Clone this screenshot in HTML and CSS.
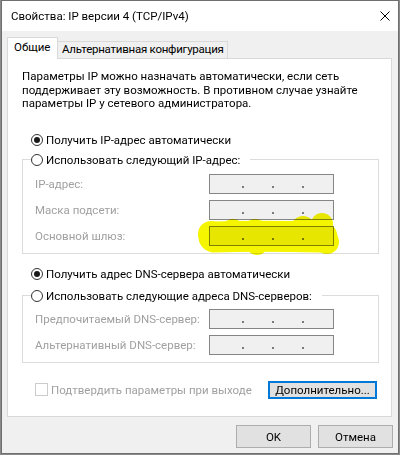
FILE: index.html
```html
<!DOCTYPE html>
<html lang="ru">
<head>
<meta charset="utf-8">
<title>Свойства: IP версии 4 (TCP/IPv4)</title>
<link rel="stylesheet" href="styles.css">
</head>
<body>
<div class="window">
  <div class="titlebar">
    <span class="title">Свойства: IP версии 4 (TCP/IPv4)</span>
    <svg class="close" width="10" height="10" viewBox="0 0 10 10"><path d="M0.5 0.5 L9.5 9.5 M9.5 0.5 L0.5 9.5" stroke="#000" stroke-width="1" fill="none"/></svg>
  </div>
  <div class="content">
    <div class="tabs">
      <div class="tab active">Общие</div>
      <div class="tab alt">Альтернативная конфигурация</div>
    </div>
    <div class="panel">
      <p class="intro">Параметры IP можно назначать автоматически, если сеть<br>поддерживает эту возможность. В противном случае узнайте<br>параметры IP у сетевого администратора.</p>

      <div class="radio-row first"><span class="radio checked"></span><span>Получить IP-адрес автоматически</span></div>
      <fieldset class="group ip">
        <legend class="radio-row"><span class="radio"></span><span>Использовать следующий IP-адрес:</span></legend>
        <div class="field"><span class="label">IP-адрес:</span><span class="ipbox"><i></i><i></i><i></i></span></div>
        <div class="field"><span class="label">Маска подсети:</span><span class="ipbox"><i></i><i></i><i></i></span></div>
        <div class="field"><span class="label">Основной шлюз:</span><span class="ipbox"><i></i><i></i><i></i></span></div>
      </fieldset>

      <div class="radio-row dns-auto"><span class="radio checked"></span><span>Получить адрес DNS-сервера автоматически</span></div>
      <fieldset class="group dns">
        <legend class="radio-row"><span class="radio"></span><span>Использовать следующие адреса DNS-серверов:</span></legend>
        <div class="field"><span class="label">Предпочитаемый DNS-сервер:</span><span class="ipbox"><i></i><i></i><i></i></span></div>
        <div class="field"><span class="label">Альтернативный DNS-сервер:</span><span class="ipbox"><i></i><i></i><i></i></span></div>
      </fieldset>

      <div class="bottom-row">
        <label class="check"><span class="checkbox"></span><span>Подтвердить параметры при выходе</span></label>
        <button class="btn advanced">Дополнительно...</button>
      </div>

      <svg class="highlight" width="150" height="44" viewBox="0 0 150 44">
        <path d="M17 25 C45 24 80 24 125 25" stroke="#f5f500" stroke-width="31" stroke-linecap="round" fill="none"/>
        <circle cx="14" cy="22" r="13" fill="#f5f500"/>
        <circle cx="36" cy="19" r="12" fill="#f5f500"/>
        <circle cx="58" cy="19" r="12" fill="#f5f500"/>
        <circle cx="82" cy="21" r="12" fill="#f5f500"/>
        <circle cx="106" cy="16" r="12" fill="#f5f500"/>
        <circle cx="125" cy="12" r="11" fill="#f5f500"/>
        <circle cx="130" cy="30" r="12" fill="#f5f500"/>
        <circle cx="60" cy="32" r="11" fill="#f5f500"/>
      </svg>
    </div>
    <div class="footer">
      <button class="btn">OK</button>
      <button class="btn">Отмена</button>
    </div>
  </div>
</div>
</body>
</html>
```
FILE: styles.css
```css
html, body {
  margin: 0;
  padding: 0;
}
body {
  background: #8a8a8a;
  width: 400px;
  height: 455px;
  font-family: Roboto, "Noto Sans", sans-serif;
  font-size: 11.5px;
  color: #000;
  white-space: nowrap;
}
.window {
  margin-left: 1px;
  width: 396px;
  height: 452px;
  border: 1px solid #6f6f6f;
  background: #f0f0f0;
  display: flex;
  flex-direction: column;
}
.titlebar {
  flex: none;
  height: 30px;
  background: #fff;
  display: flex;
  align-items: center;
  justify-content: space-between;
  padding: 0 8px 0 9px;
}
.title {
  font-size: 11.5px;
  line-height: 16px;
}
.close {
  display: block;
}
.content {
  flex: none;
  padding: 6px 5px 0 5px;
  display: flex;
  flex-direction: column;
}
.tabs {
  flex: none;
  display: flex;
  align-items: flex-end;
  height: 22px;
  margin-bottom: -1px;
  position: relative;
  z-index: 1;
}
.tab {
  box-sizing: border-box;
  height: 17px;
  margin-bottom: 1px;
  border: 1px solid #d9d9d9;
  border-bottom: none;
  background: #f0f0f0;
  padding: 0 0 0 4px;
  line-height: 15px;
  width: 171px;
  margin-left: -1px;
}
.tab.alt {
  letter-spacing: -0.25px;
}
.tab.active {
  height: 22px;
  margin-bottom: 0;
  margin-left: 0;
  background: #fff;
  width: 51px;
  padding-left: 6px;
  line-height: 19px;
}
.panel {
  flex: none;
  position: relative;
  box-sizing: border-box;
  height: 359px;
  width: 385px;
  background: #fff;
  border: 1px solid #d9d9d9;
  padding: 11px 10px 0 14px;
}
.intro {
  margin: 0;
  line-height: 13.5px;
}
.radio-row {
  display: flex;
  align-items: center;
  height: 20px;
  gap: 3px;
}
.radio-row.first {
  margin-top: 19px;
  padding-left: 9px;
}
.radio {
  box-sizing: border-box;
  width: 12px;
  height: 12px;
  border: 1px solid #333;
  border-radius: 50%;
  display: flex;
  align-items: center;
  justify-content: center;
  background: #fff;
}
.radio.checked::after {
  content: "";
  width: 6px;
  height: 6px;
  border-radius: 50%;
  background: #1a1a1a;
}
.group {
  margin: 0;
  border: 1px solid #dcdcdc;
  padding: 4px 0 7px 8px;
  width: 357px;
  box-sizing: border-box;
  display: flex;
  flex-direction: column;
  gap: 6px;
}
.group legend {
  padding: 0 10px 0 0;
}
.group.dns {
  margin-top: 2px;
  padding-top: 3px;
}
.dns-auto {
  margin-top: 10px;
  padding-left: 9px;
}
.field {
  display: grid;
  grid-template-columns: 174px 125px;
  align-items: center;
  height: 20px;
  padding-left: 4px;
}
.label {
  color: #a0a0a0;
}
.ipbox {
  box-sizing: border-box;
  height: 20px;
  border: 1px solid #858585;
  background: #f0f0f0;
  display: flex;
  align-items: flex-end;
  padding: 0 0 5px 32px;
  gap: 28px;
}
.ipbox i {
  display: block;
  width: 2px;
  height: 2px;
  background: #7a7a7a;
}
.bottom-row {
  margin-top: 18px;
  display: flex;
  align-items: center;
  justify-content: space-between;
  padding-left: 13px;
  width: 355px;
  box-sizing: border-box;
}
.check {
  display: flex;
  align-items: center;
  gap: 3px;
  color: #a0a0a0;
}
.checkbox {
  box-sizing: border-box;
  width: 13px;
  height: 13px;
  border: 1px solid #cccccc;
  background: #fff;
}
.btn {
  font: inherit;
  color: #000;
  box-sizing: border-box;
  width: 75px;
  height: 23px;
  border: 1px solid #adadad;
  background: #e1e1e1;
  padding: 0;
}
.btn.advanced {
  width: 109px;
  height: 18px;
  border: 2px solid #0078d7;
  line-height: 12px;
}
.highlight {
  position: absolute;
  left: 189px;
  top: 153px;
  mix-blend-mode: multiply;
}
.footer {
  flex: none;
  display: flex;
  justify-content: flex-end;
  gap: 7px;
  padding: 8px 0 0 0;
}
```
